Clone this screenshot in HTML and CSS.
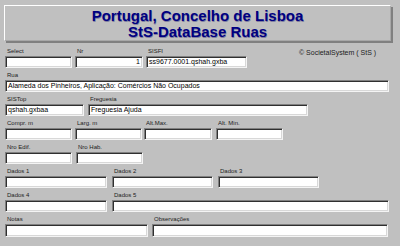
FILE: index.html
```html
<!DOCTYPE html>
<html lang="pt">
<head>
<meta charset="utf-8">
<title>StS-DataBase Ruas</title>
<link rel="stylesheet" href="styles.css">
</head>
<body>
<div class="title">
  <div>Portugal, Concelho de Lisboa</div>
  <div>StS-DataBase Ruas</div>
</div>
<div class="form">
  <div class="row">
    <div class="field w67"><span class="lbl">Select</span><div class="box"></div></div>
    <div class="field w68"><span class="lbl">Nr</span><div class="box num">1</div></div>
    <div class="field w101"><span class="lbl">SISFI</span><div class="box">ss9677.0001.qshah.gxba</div></div>
    <div class="copy">© SocietalSystem ( StS )</div>
  </div>
  <div class="row">
    <div class="field w384"><span class="lbl">Rua</span><div class="box">Alameda dos Pinheiros, Aplicação: Comércios Não Ocupados</div></div>
  </div>
  <div class="row g4">
    <div class="field w79"><span class="lbl">SISTop</span><div class="box">qshah.gxbaa</div></div>
    <div class="field w220"><span class="lbl">Freguesia</span><div class="box">Freguesia Ajuda</div></div>
  </div>
  <div class="row">
    <div class="field w67"><span class="lbl">Compr. m</span><div class="box"></div></div>
    <div class="field w67"><span class="lbl">Larg. m</span><div class="box"></div></div>
    <div class="field w68 ml-1"><span class="lbl">Alt.Max.</span><div class="box"></div></div>
    <div class="field w67 ml1"><span class="lbl">Alt. Min.</span><div class="box"></div></div>
  </div>
  <div class="row g4">
    <div class="field w67"><span class="lbl">Nro Edif.</span><div class="box"></div></div>
    <div class="field w67"><span class="lbl">Nro Hab.</span><div class="box"></div></div>
  </div>
  <div class="row g5">
    <div class="field w102"><span class="lbl">Dados 1</span><div class="box"></div></div>
    <div class="field w101"><span class="lbl">Dados 2</span><div class="box"></div></div>
    <div class="field w101"><span class="lbl">Dados 3</span><div class="box"></div></div>
  </div>
  <div class="row g5">
    <div class="field w102"><span class="lbl">Dados 4</span><div class="box"></div></div>
    <div class="field w277"><span class="lbl">Dados 5</span><div class="box"></div></div>
  </div>
  <div class="row g4">
    <div class="field w143"><span class="lbl">Notas</span><div class="box tall"></div></div>
    <div class="field w236"><span class="lbl">Observações</span><div class="box tall"></div></div>
  </div>
</div>
</body>
</html>
```

FILE: styles.css
```css
html, body {
  margin: 0;
  padding: 0;
  background: #c0c0c0;
}
body {
  width: 400px;
  height: 246px;
  overflow: hidden;
  font-family: "Liberation Sans", Arial, sans-serif;
}
.title {
  box-sizing: border-box;
  margin: 5px 0 0 4px;
  width: 387px;
  height: 36px;
  padding-top: 2px;
  border-top: 1px solid #ffffff;
  border-left: 1px solid #ffffff;
  border-right: 1px solid #a8a8a8;
  border-bottom: 1px solid #a8a8a8;
  box-shadow: 2px 2px 0 #808080;
  text-align: center;
  font-weight: bold;
  font-size: 15px;
  line-height: 16px;
  color: #000080;
  text-shadow: 0.5px 0.5px 0 #8080a0;
}
.form {
  margin: 6px 0 0 5px;
  display: flex;
  flex-direction: column;
  gap: 3px;
}
.row {
  display: flex;
  gap: 3px;
}
.row.g4 { gap: 4px; }
.row.g5 { gap: 5px; }
.field {
  display: flex;
  flex-direction: column;
  gap: 1px;
}
.lbl {
  font-size: 6px;
  line-height: 8px;
  height: 8px;
  padding-left: 2px;
  color: #1c1c1c;
  white-space: nowrap;
}
.box {
  box-sizing: border-box;
  height: 12px;
  background: #ffffff;
  border-top: 1px solid #808080;
  border-left: 1px solid #808080;
  border-right: 1px solid #f4f4f4;
  border-bottom: 1px solid #f4f4f4;
  box-shadow: inset 1px 1px 0 #303030, inset -1px -1px 0 #d8d8d8;
  font-size: 7px;
  line-height: 10px;
  padding: 0 2px;
  color: #000;
  white-space: nowrap;
  overflow: hidden;
}
.box.num { text-align: right; }
.box.tall { height: 13px; }
.copy {
  margin-left: 49px;
  padding-top: 2px;
  font-size: 7px;
  line-height: 8px;
  color: #202020;
  white-space: nowrap;
}
.w67 { width: 67px; }
.w68 { width: 68px; }
.w79 { width: 79px; }
.w101 { width: 101px; }
.w102 { width: 102px; }
.w143 { width: 143px; }
.w220 { width: 220px; }
.w236 { width: 236px; }
.w277 { width: 277px; }
.w384 { width: 384px; }
.ml-1 { margin-left: -1px; }
.ml1 { margin-left: 1px; }
```
